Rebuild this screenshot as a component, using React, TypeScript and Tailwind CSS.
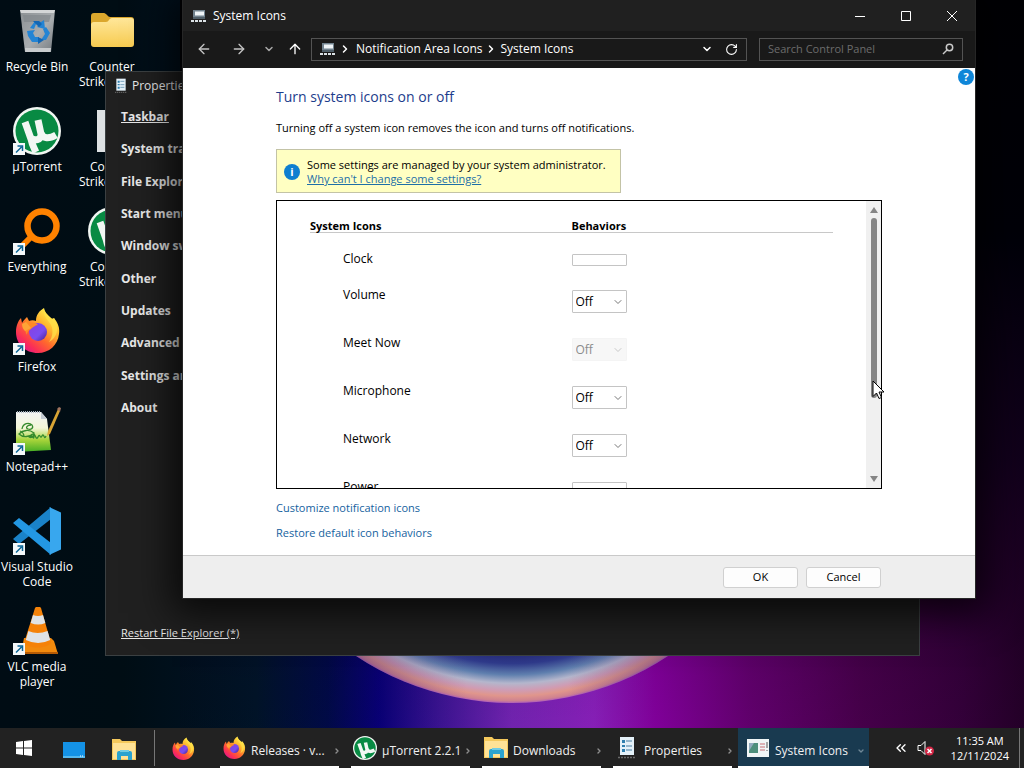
import type { ReactNode } from "react";
import { ArrowLeft, ArrowRight, ArrowUp, ChevronDown, ChevronRight, ChevronsLeft, RotateCw } from "lucide-react";

type Launcher = { name: string; lines: string[]; icon: ReactNode; shortcut?: boolean };
type Row = { name: string; kind: "empty" | "on" | "disabled" };

const sections = ["Taskbar", "System tray", "File Explorer", "Start menu", "Window switcher", "Other", "Updates", "Advanced", "Settings and", "About"];

const rows: Row[] = [
  { name: "Clock", kind: "empty" },
  { name: "Volume", kind: "on" },
  { name: "Meet Now", kind: "disabled" },
  { name: "Microphone", kind: "on" },
  { name: "Network", kind: "on" },
  { name: "Power", kind: "on" },
];

function Wallpaper() {
  return (
    <svg className="absolute inset-0 h-full w-full" viewBox="0 0 1024 768" preserveAspectRatio="none" aria-hidden="true">
      <defs>
        <linearGradient id="base" x1="0" x2="1" y1="0" y2="0">
          <stop offset="0" stopColor="#000c14" />
          <stop offset="0.12" stopColor="#000d14" />
          <stop offset="0.25" stopColor="#001428" />
          <stop offset="0.32" stopColor="#000a48" />
          <stop offset="0.37" stopColor="#080078" />
          <stop offset="0.43" stopColor="#3c1494" />
          <stop offset="0.5" stopColor="#7424b4" />
          <stop offset="0.58" stopColor="#8a20bc" />
          <stop offset="0.64" stopColor="#84009e" />
          <stop offset="0.73" stopColor="#640070" />
          <stop offset="0.84" stopColor="#48004c" />
          <stop offset="0.94" stopColor="#34003a" />
          <stop offset="1" stopColor="#240028" />
        </linearGradient>
        <linearGradient id="shade" x1="0" x2="0" y1="0" y2="1">
          <stop offset="0" stopColor="#000004" />
          <stop offset="0.3" stopColor="#000008" />
          <stop offset="0.6" stopColor="#080014" stopOpacity="0.7" />
          <stop offset="0.88" stopColor="#100018" stopOpacity="0.08" />
          <stop offset="1" stopColor="#100018" stopOpacity="0" />
        </linearGradient>
        <radialGradient id="orb" gradientUnits="userSpaceOnUse" cx="512" cy="421" r="282">
          <stop offset="0.8" stopColor="#20206a" />
          <stop offset="0.86" stopColor="#2f3a8a" />
          <stop offset="0.9" stopColor="#5f7fae" />
          <stop offset="0.93" stopColor="#b4b6cc" />
          <stop offset="0.955" stopColor="#cf9cb4" />
          <stop offset="0.975" stopColor="#e0968c" />
          <stop offset="0.992" stopColor="#cf8290" />
          <stop offset="1" stopColor="#b060b8" />
        </radialGradient>
        <linearGradient id="orbSides" x1="0" x2="1" y1="0" y2="0">
          <stop offset="0.2" stopColor="#5a3a70" stopOpacity="0.5" />
          <stop offset="0.42" stopColor="#5a3a70" stopOpacity="0" />
          <stop offset="0.6" stopColor="#5a3a70" stopOpacity="0" />
          <stop offset="0.8" stopColor="#5a3a70" stopOpacity="0.5" />
        </linearGradient>
      </defs>
      <rect width="1024" height="768" fill="url(#base)" />
      <rect x="180" width="844" height="768" fill="url(#shade)" />
      <circle cx="512" cy="421" r="282" fill="url(#orb)" />
      <circle cx="512" cy="421" r="282" fill="url(#orbSides)" />
    </svg>
  );
}

function RecycleBinIcon() {
  return (
    <svg className="h-12 w-12" viewBox="0 0 48 48" aria-hidden="true">
      <defs>
        <linearGradient id="bin" x1="0" x2="1" y1="0" y2="1">
          <stop offset="0" stopColor="#8b9093" />
          <stop offset="0.55" stopColor="#a9adb0" />
          <stop offset="1" stopColor="#747a7f" />
        </linearGradient>
      </defs>
      <path d="M7 3h35l-4 42H12z" fill="url(#bin)" />
      <path d="M7 3h35l-1 3H8z" fill="#d4d6d7" />
      <path d="M10 8h28l-2 7H11z" fill="#81878b" opacity=".7" />
      <path d="M12 41h26l-.4 4H12.3z" fill="#c8cbcd" />
      <g fill="#2384d4">
        <path d="M17 21l5-7 6 1 3-2 1 9-8-2 2-2-3-1-2 5z" />
        <path d="M33 20l4 6-4 7h-5l2-3 2-3-2-5z" />
        <path d="M14 24l8-1-2 3 2 4h4v5h-7l-4-6z" />
      </g>
      <path d="M20 14l6 0 3 3-3 3zM31 33l-6-3v7z" fill="#1266b4" />
    </svg>
  );
}

function FolderIcon() {
  return (
    <svg className="h-12 w-12" viewBox="0 0 48 48" aria-hidden="true">
      <defs>
        <linearGradient id="folder" x1="0" x2="0" y1="0" y2="1">
          <stop offset="0" stopColor="#ffe79a" />
          <stop offset="1" stopColor="#f7cb50" />
        </linearGradient>
      </defs>
      <path d="M3 9a3 3 0 013-3h10c2 0 4 4 6 4h21a3 3 0 013 3v10H3z" fill="#dba72d" />
      <path d="M3 18c0-2 1-3 3-3h12c3 0 3-4 6-4h19a3 3 0 013 3v23a3 3 0 01-3 3H6a3 3 0 01-3-3z" fill="url(#folder)" />
    </svg>
  );
}

function UTorrentIcon({ className = "h-12 w-12" }: { className?: string }) {
  return (
    <svg className={className} viewBox="0 0 48 48" aria-hidden="true">
      <circle cx="24" cy="24" r="24" fill="#f2f7f3" />
      <circle cx="24" cy="24" r="21.5" fill="#088a43" />
      <path d="M12 15l6 17c1 6 3 9 5 13M17 30c4 5 12 3 11-3l-3-14M28 26c2 6 8 6 15 2" fill="none" stroke="#f2f7f3" strokeWidth="7" />
    </svg>
  );
}

function EverythingIcon() {
  return (
    <svg className="h-12 w-12" viewBox="0 0 48 48" aria-hidden="true">
      <circle cx="29" cy="19" r="14.5" fill="none" stroke="#ff8200" strokeWidth="6.5" />
      <path d="M19 29L8 40" stroke="#ff8200" strokeWidth="6" />
    </svg>
  );
}

function FirefoxIcon({ className = "h-12 w-12" }: { className?: string }) {
  return (
    <svg className={className} viewBox="0 0 48 48" aria-hidden="true">
      <defs>
        <linearGradient id="fox" x1="0.85" x2="0.15" y1="0.1" y2="0.95">
          <stop offset="0" stopColor="#fff44f" />
          <stop offset="0.3" stopColor="#ffb62e" />
          <stop offset="0.55" stopColor="#ff6a2c" />
          <stop offset="0.8" stopColor="#fb3055" />
          <stop offset="1" stopColor="#e0158e" />
        </linearGradient>
        <linearGradient id="globe" x1="0" x2="1" y1="0" y2="1">
          <stop offset="0" stopColor="#8a3ee0" />
          <stop offset="0.6" stopColor="#7a4df0" />
          <stop offset="1" stopColor="#46208c" />
        </linearGradient>
      </defs>
      <path d="M31 1c1 5 4 7 7 10 1 1 2 1 3 0 4 5 6 10 5 16-1 11-10 19-21 19C12 46 3 37 3 25c0-6 2-11 5-14l1 5c1-2 3-4 5-6l2 4c2-1 5-1 7 0 0-6 3-10 8-13z" fill="url(#fox)" />
      <circle cx="25" cy="25" r="9" fill="url(#globe)" />
      <path d="M14 12l3 4c3-1 6 0 8 2-3 0-4 2-6 3-2 2-5 3-5 7-3-5-3-12 0-16z" fill="#ff8a25" />
      <path d="M9 17c0 3 1 5 3 7l6-3-5-6z" fill="#ffa436" />
      <path d="M31 1c-2 7 4 12 7 17 3 6 1 13-2 17 8-4 11-14 5-24-2 2-3 0-4-1-3-3-6-5-6-9z" fill="#ffe14a" opacity=".75" />
    </svg>
  );
}

function NotepadIcon() {
  return (
    <svg className="h-12 w-12 overflow-visible" viewBox="0 0 48 48" aria-hidden="true">
      <defs>
        <linearGradient id="pad" x1="0" x2="0" y1="0" y2="1">
          <stop offset="0" stopColor="#f2f4f5" />
          <stop offset="0.4" stopColor="#f3f6d8" />
          <stop offset="0.7" stopColor="#a7d43a" />
          <stop offset="1" stopColor="#43ad24" />
        </linearGradient>
      </defs>
      <path d="M3 5h25l6 7 4 31-35 2z" fill="url(#pad)" />
      <path d="M28 5l6 7h-6z" fill="#c4ccd3" />
      <path d="M4 5h24" stroke="#aeb9c2" strokeWidth="2" strokeDasharray="1 1" />
      <path d="M9 22c1-6 7-7 10-4 2 3-1 5-4 4s-1-4 3-4M6 27c4-4 10-5 15-1-4 4-11 5-15 1zM7 24c3 1 4 3 4 6M15 29c3 3 5 1 6-2M17 31c1-6 4 4 4-2s2 6 4 1 2 3 4-1 2 5 4 0" fill="none" stroke="#348a2c" strokeWidth="1.3" />
      <path d="M45 2l2 2-10 23-3 2 1-5z" fill="#d7a434" />
      <path d="M44 2l2-2 2 1-1 4z" fill="#a17560" />
    </svg>
  );
}

function VsCodeIcon() {
  return (
    <svg className="h-12 w-12" viewBox="0 0 48 48" aria-hidden="true">
      <path d="M0 32l6 5L38 12V0z" fill="#1a83c9" />
      <path d="M0 16l6-5 32 25v12z" fill="#2397e3" />
      <path d="M36 0l12 5.500v37L36 48c1-1 1-2 1-3V3c0-1 0-2-1-3z" fill="#38a7ee" />
    </svg>
  );
}

function VlcIcon() {
  return (
    <svg className="h-12 w-12" viewBox="0 0 48 48" aria-hidden="true">
      <path d="M11 31h27l3 3 4 13H8z" fill="#f28a0d" />
      <path d="M8 45h37v2H8z" fill="#b65b05" />
      <path d="M22 1c1-2 5-2 6 0l10 35c-5 6-22 6-27 0z" fill="#f58208" />
      <path d="M20 8q5 2 10 0l2.300 8q-7 3-14.600 0zM15.400 24q9 4 19.200 0l2.600 9q-12 6-24.400 0z" fill="#dfe3e6" />
    </svg>
  );
}

function PageIcon() {
  return (
    <svg className="h-12 w-12" viewBox="0 0 48 48" aria-hidden="true">
      <path d="M9 3h30v42H9z" fill="#dde1e3" />
    </svg>
  );
}

function DocumentIcon({ className }: { className: string }) {
  return (
    <svg className={className} viewBox="0 0 24 24" aria-hidden="true">
      <path d="M5 1h14v18H5z" fill="#e4f1f9" />
      <path d="M7 4h3v3H7zM7 9h3v2H7zM7 13h3v3H7z" fill="#2f7fae" />
      <path d="M11 5h6M11 10h6M11 14h6" stroke="#7ba4bf" strokeWidth="1.500" />
      <path d="M3 21.500h18" stroke="#6a6a6a" strokeWidth="1.500" strokeDasharray="2 1" />
    </svg>
  );
}

function TrayIcon() {
  return (
    <svg className="h-4 w-4" viewBox="0 0 16 16" aria-hidden="true">
      <path d="M2 2h12v9H2z" fill="#71828e" />
      <path d="M4 3.500h9v4H4z" fill="#eef4f7" />
      <path d="M2 9.500h12v1H2z" fill="#2e3a43" />
      <path d="M0 13h16" stroke="#dce2e6" strokeWidth="2" strokeDasharray="3 1" />
    </svg>
  );
}

function ExplorerIcon() {
  return (
    <svg className="h-6 w-6" viewBox="0 0 24 24" aria-hidden="true">
      <path d="M0 1h8l2 2h14v19H0z" fill="#f5c95c" />
      <path d="M1 5h22v16H1z" fill="#ffe296" />
      <path d="M5 22v-7q0-2 2-2h11q2 0 2 2v7h-4v-4H9v4z" fill="#2ba3cf" />
      <path d="M8 12h9v2H8z" fill="#72cce3" />
    </svg>
  );
}

function ControlPanelIcon() {
  return (
    <svg className="h-6 w-6" viewBox="0 0 24 24" aria-hidden="true">
      <path d="M1 3h22v18H1z" fill="#f0f5f6" />
      <path d="M3 7h9v10H3z" fill="#4e8f7c" />
      <path d="M3 7h5l-5 8z" fill="#91a9bd" />
      <path d="M14 8h5M14 11h5M14 14h5" stroke="#d39aa0" strokeWidth="1.500" />
      <path d="M21 6v6M21 14v1" stroke="#555" />
    </svg>
  );
}

const columns: Launcher[][] = [
  [
    { name: "bin", lines: ["Recycle Bin"], icon: <RecycleBinIcon /> },
    { name: "utorrent", lines: ["µTorrent"], icon: <UTorrentIcon />, shortcut: true },
    { name: "everything", lines: ["Everything"], icon: <EverythingIcon />, shortcut: true },
    { name: "firefox", lines: ["Firefox"], icon: <FirefoxIcon />, shortcut: true },
    { name: "notepad", lines: ["Notepad++"], icon: <NotepadIcon />, shortcut: true },
    { name: "code", lines: ["Visual Studio", "Code"], icon: <VsCodeIcon />, shortcut: true },
    { name: "vlc", lines: ["VLC media", "player"], icon: <VlcIcon />, shortcut: true },
  ],
  [
    { name: "cs-folder", lines: ["Counter", "Strike"], icon: <FolderIcon /> },
    { name: "cs-page", lines: ["Co", "Strike"], icon: <PageIcon /> },
    { name: "cs-torrent", lines: ["Co", "Strike"], icon: <UTorrentIcon /> },
  ],
];

// labels in the second column run on behind the Properties window
const labelClass: Record<string, string> = {
  Strike: "w-[66px] text-left",
  Co: "w-11 text-left",
};

function DesktopIcon({ item }: { item: Launcher }) {
  return (
    <button className="flex h-[100px] w-[74px] flex-col items-center pt-[7px] text-[12px] leading-[15px] text-white">
      <span className="relative mb-1 block h-12 w-12">
        {item.icon}
        {item.shortcut ? (
          <svg className="absolute bottom-0 left-0 h-3 w-3" viewBox="0 0 12 12" aria-hidden="true">
            <path d="M0 0h12v12H0z" fill="#f4f8fa" />
            <path d="M3 9.500L8.500 4M4.500 3h5v5" fill="none" stroke="#0b6596" strokeWidth="1.500" />
          </svg>
        ) : null}
      </span>
      {item.lines.map((line) => <span key={line} className={labelClass[line] ?? "whitespace-nowrap"}>{line}</span>)}
    </button>
  );
}

function PropertiesWindow() {
  return (
    <section className="absolute bottom-[72px] left-[105px] right-[104px] top-[71px] flex flex-col border border-[#3b4042] bg-[#202020] pl-[15px] text-[#e8e8e8]">
      <header className="-ml-2 flex h-7 items-center gap-[3px] text-[12px]">
        <DocumentIcon className="h-4 w-4" />
        <span>Properties</span>
      </header>
      <nav className="mt-[9px] flex h-[307px] flex-col items-start justify-between">
        {sections.map((name) => <a key={name} href="#" className={`whitespace-nowrap text-[12px] font-bold leading-4 ${name === "Taskbar" ? "underline" : ""}`}>{name}</a>)}
      </nav>
      <a href="#" className="mb-[14px] mt-auto self-start text-[11px] leading-4 underline">Restart File Explorer (*)</a>
    </section>
  );
}

function BehaviorSelect({ row }: { row: Row }) {
  if (row.kind === "empty") {
    return (
      <select id={row.name} className="mt-1 block h-3 w-[55px] appearance-none rounded-[1px] border border-[#c4c4c4] bg-white">
        <option />
      </select>
    );
  }
  return (
    <span className="relative mt-1 block w-[55px]">
      <select id={row.name} disabled={row.kind === "disabled"} className="block h-[23px] w-full appearance-none rounded-[1px] border border-[#c4c4c4] bg-white pl-[3px] pt-[2px] text-[12px] leading-[18px] disabled:border-[#f4f4f4] disabled:bg-[#f7f7f7] disabled:text-[#8c8c8c] disabled:opacity-100">
        <option>Off</option>
      </select>
      <ChevronDown className={`pointer-events-none absolute right-[3px] top-[6px] h-3 w-3 ${row.kind === "disabled" ? "text-[#c8c8c8]" : "text-[#777]"}`} />
    </span>
  );
}

function IconList() {
  return (
    <div className="mt-[7px] flex h-[289px] border border-black bg-white">
      <div className="flex-1 overflow-hidden px-[33px] pt-[18px]">
        <table className="w-full table-fixed text-left text-[12px]">
          <thead>
            <tr className="border-b border-[#c8c8c8] text-[11px] leading-[13px]">
              <th className="w-1/2 font-bold">System Icons</th>
              <th className="w-1/2 font-bold">Behaviors</th>
            </tr>
          </thead>
          <tbody>
            {rows.map((row) => (
              <tr key={row.name} className={row.kind === "empty" ? "h-[53px]" : "h-12"}>
                <td className={`pl-[33px] align-top leading-[18px] ${row.kind === "empty" ? "pt-[17px]" : ""}`}>
                  <label htmlFor={row.name}>{row.name}</label>
                </td>
                <td className={`align-top ${row.kind === "empty" ? "pt-[17px]" : ""}`}><BehaviorSelect row={row} /></td>
              </tr>
            ))}
          </tbody>
        </table>
      </div>
      <div className="flex w-[15px] flex-col items-center bg-[#f0f0f0] py-[5px]">
        <svg className="h-2 w-2" viewBox="0 0 8 8" aria-hidden="true"><path d="M4 1l4 6H0z" fill="#858585" /></svg>
        <div className="mt-1 h-[180px] w-[6px] rounded-full bg-[#858585]" />
        <svg className="mt-auto h-2 w-2" viewBox="0 0 8 8" aria-hidden="true"><path d="M4 7l4-6H0z" fill="#858585" /></svg>
      </div>
    </div>
  );
}

function SystemIconsWindow() {
  return (
    <section className="absolute left-[182px] right-12 top-0 border-x border-b border-[#262626] bg-white text-black shadow-[0_4px_36px_10px_rgba(0,0,0,0.75)]">
      <header className="flex h-[31px] items-center bg-[#202020] pl-2 text-white">
        <TrayIcon />
        <h1 className="ml-[6px] flex-1 text-[12px]">System Icons</h1>
        <button aria-label="Minimize" className="flex w-[46px] justify-center"><svg className="h-[10px] w-[10px]" viewBox="0 0 10 10"><path d="M0 5.500h10" stroke="#fff" /></svg></button>
        <button aria-label="Maximize" className="flex w-[46px] justify-center"><svg className="h-[10px] w-[10px]" viewBox="0 0 10 10"><path d="M.5.5h9v9h-9z" fill="none" stroke="#fff" /></svg></button>
        <button aria-label="Close" className="flex w-[46px] justify-center"><svg className="h-[10px] w-[10px]" viewBox="0 0 10 10"><path d="M0 0l10 10M10 0L0 10" stroke="#fff" /></svg></button>
      </header>
      <div className="flex h-[37px] items-center bg-[#191919] pb-px pl-[13px] pr-3 text-[12px] text-white">
        <button aria-label="Back" className="mr-[19px] text-[#c4c4c4]"><ArrowLeft className="h-4 w-4" /></button>
        <button aria-label="Forward" className="mr-4 text-[#c4c4c4]"><ArrowRight className="h-4 w-4" /></button>
        <button aria-label="Recent" className="mr-3 text-[#a8a8a8]"><ChevronDown className="h-3 w-3" strokeWidth={3} /></button>
        <button aria-label="Up" className="mr-2"><ArrowUp className="h-4 w-4" /></button>
        <div className="flex h-[23px] flex-1 items-center border border-[#535353] px-2">
          <TrayIcon />
          <ChevronRight className="ml-[3px] mr-[5px] h-3 w-3" strokeWidth={3} />
          <a href="#">Notification Area Icons</a>
          <ChevronRight className="mx-[3px] h-3 w-3" strokeWidth={3} />
          <a href="#">System Icons</a>
          <button aria-label="History" className="ml-auto mr-3"><ChevronDown className="h-3 w-3" strokeWidth={3} /></button>
          <button aria-label="Refresh"><RotateCw className="h-[13px] w-[13px]" /></button>
        </div>
        <div className="ml-3 flex h-[23px] w-[204px] items-center border border-[#535353] px-2">
          <input aria-label="Search Control Panel" placeholder="Search Control Panel" className="min-w-0 flex-1 bg-transparent text-[11px] outline-none placeholder:text-[#6c6c6c]" />
          <svg className="h-3 w-3" viewBox="0 0 12 12" aria-hidden="true"><path d="M1 11l4-4" stroke="#c9c9c9" strokeWidth="1.500" /><circle cx="7.500" cy="4.500" r="3.200" fill="none" stroke="#c9c9c9" strokeWidth="1.500" /></svg>
        </div>
      </div>
      <main className="relative px-[93px] pb-[13px] pt-[17px]">
        <button aria-label="Help" className="absolute right-[1px] top-[1px] h-4 w-4 rounded-full bg-[#0f86d8] text-center text-[11px] font-bold leading-4 text-white">?</button>
        <h2 className="text-[14px] leading-6 text-[#1c3c8c]">Turn system icons on or off</h2>
        <p className="mt-[10px] text-[11px] leading-[18px]">Turning off a system icon removes the icon and turns off notifications.</p>
        <div className="mt-3 flex w-[345px] items-center gap-[7px] border border-[#c3c3a6] bg-[#ffffc2] pb-[6px] pl-[7px] pt-2 text-[11px] leading-[14px]">
          <span className="h-4 w-4 rounded-full bg-[#0f7fd0] text-center font-bold leading-4 text-white">i</span>
          <p>Some settings are managed by your system administrator.<br /><a href="#" className="text-[#1d6fa8] underline">Why can't I change some settings?</a></p>
        </div>
        <IconList />
        <div className="mt-[10px] flex flex-col items-start gap-[7px] text-[11px] leading-[18px] text-[#1562a0]">
          <a href="#">Customize notification icons</a>
          <a href="#">Restore default icon behaviors</a>
        </div>
      </main>
      <footer className="flex h-[43px] items-center justify-end gap-2 border-t border-[#c9c9c9] bg-[#eeeeee] pr-[94px] text-[11px]">
        <button className="h-[21px] w-[75px] rounded-[3px] border border-[#d0d0d0] bg-[#fdfdfd]">OK</button>
        <button className="h-[21px] w-[75px] rounded-[3px] border border-[#d0d0d0] bg-[#fdfdfd]">Cancel</button>
      </footer>
    </section>
  );
}

function Task({ label, icon, active = false }: { label: string; icon: ReactNode; active?: boolean }) {
  return (
    <button className={`relative flex h-full min-w-0 flex-1 items-center pl-2 text-[12px] text-[#f0f0f0] ${active ? "bg-[#193a50]" : ""}`}>
      {icon}
      <span className="ml-[5px] mr-auto whitespace-nowrap pt-[6px]">{label}</span>
      {active ? <ChevronDown className="mr-1 mt-[5px] h-2 w-2 text-[#6f8796]" strokeWidth={4} /> : <ChevronRight className="mr-1 mt-[5px] h-2 w-2 text-[#8f8f8f]" strokeWidth={4} />}
      <span className={`absolute bottom-0 h-[2px] bg-white ${active ? "inset-x-0" : "inset-x-[6px]"}`} />
    </button>
  );
}

function Taskbar() {
  return (
    <footer className="relative flex h-10 shrink-0 items-center bg-[#222222] text-white">
      <button aria-label="Start" className="flex w-12 justify-center"><svg className="h-4 w-4" viewBox="0 0 16 16"><path d="M0 2l7-1v6.500H0zM8 1l8-1v7.500H8zM0 8.500h7V15l-7-1zM8 8.500h8V16l-8-1z" fill="#fff" /></svg></button>
      <button aria-label="Show windows" className="flex w-[52px] justify-center"><svg className="mt-1 h-4 w-[22px]" viewBox="0 0 22 16"><path d="M0 0h22v16H0z" fill="#1492e6" /><path d="M0 14h22v2H0z" fill="#53b8ef" /><path d="M17 14h4" stroke="#fff" strokeDasharray="1 1" /></svg></button>
      <button aria-label="File Explorer" className="flex w-12 justify-center pt-1"><ExplorerIcon /></button>
      <span className="ml-[6px] h-9 w-px bg-[#777]" />
      <button aria-label="Firefox" className="mr-[19px] flex w-10 justify-end pt-[2px]"><FirefoxIcon className="h-6 w-6" /></button>
      <div className="flex h-full min-w-0 flex-1">
        <Task label="Releases · v..." icon={<FirefoxIcon className="h-6 w-6" />} />
        <Task label="µTorrent 2.2.1" icon={<UTorrentIcon className="h-6 w-6" />} />
        <Task label="Downloads" icon={<ExplorerIcon />} />
        <Task label="Properties" icon={<DocumentIcon className="h-6 w-6" />} />
        <Task label="System Icons" icon={<ControlPanelIcon />} active />
      </div>
      <div className="flex w-[155px] items-center">
        <button aria-label="Hidden icons" className="ml-6"><ChevronsLeft className="h-4 w-4" /></button>
        <button aria-label="Volume" className="ml-2">
          <svg className="h-4 w-[18px]" viewBox="0 0 18 16"><path d="M1 5.500h3l4-4v13l-4-4H1z" fill="none" stroke="#fff" /><circle cx="12.500" cy="11" r="4.500" fill="#d32645" /><path d="M10.500 9l4 4M14.500 9l-4 4" stroke="#fff" strokeWidth="1.500" /></svg>
        </button>
        <time className="ml-auto mr-[10px] whitespace-nowrap text-center text-[11px] leading-[15px]">11:35 AM<br />12/11/2024</time>
        <span className="mr-1 h-10 w-px bg-[#777]" />
      </div>
    </footer>
  );
}

export default function App() {
  return (
    <div className="relative flex h-screen w-full flex-col overflow-hidden bg-[#000c14] font-['Open_Sans','Noto_Sans',sans-serif]">
      <Wallpaper />
      <div className="relative min-h-0 flex-1">
        <div className="flex gap-px">
          {columns.map((items, index) => (
            <div key={index} className="flex flex-col">
              {items.map((item) => <DesktopIcon key={item.name} item={item} />)}
            </div>
          ))}
        </div>
        <PropertiesWindow />
        <SystemIconsWindow />
        <svg className="absolute right-[139px] top-[380px] h-5 w-[13px]" viewBox="0 0 13 20" aria-hidden="true">
          <path d="M1 1v15.500l3.500-3.500 2.500 5.500 2.500-1-2.500-5.500h5z" fill="#fff" stroke="#000" />
        </svg>
      </div>
      <Taskbar />
    </div>
  );
}
